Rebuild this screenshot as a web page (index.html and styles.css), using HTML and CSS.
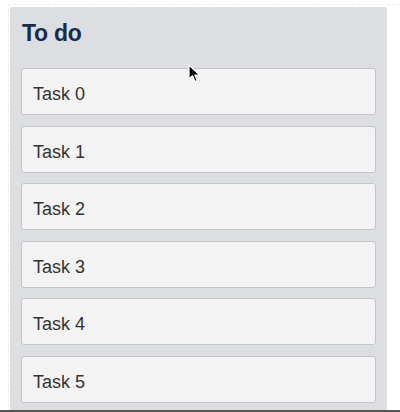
FILE: index.html
```html
<!DOCTYPE html>
<html lang="en">
<head>
    <meta charset="UTF-8">
    <meta name="viewport" content="width=device-width, initial-scale=1.0">
    <title>To do</title>
    <link rel="stylesheet" href="styles.css">
</head>
<body>
    <div class="viewport">
        <div class="board">
            <div class="list">
                <h2 class="list-title">To do</h2>
                <div class="cards">
                    <div class="card">Task 0</div>
                    <div class="card">Task 1</div>
                    <div class="card">Task 2</div>
                    <div class="card">Task 3</div>
                    <div class="card">Task 4</div>
                    <div class="card">Task 5</div>
                </div>
            </div>
        </div>
        <!-- mouse pointer from the recording -->
        <svg class="cursor" width="14" height="20" viewBox="0 0 14 20">
            <path d="M1 1 L1 15 L4.5 11.8 L7 17.5 L9.2 16.5 L6.8 11 L11.5 11 Z" fill="#000" stroke="#fff" stroke-width="1.2" stroke-linejoin="round"/>
        </svg>
    </div>
    <div class="bottom-line"></div>
</body>
</html>
```

FILE: styles.css
```css
body {
    margin: 0;
    background: #fff;
    font-family: "Liberation Sans", Arial, sans-serif;
}

.viewport {
    position: relative;
    height: 410px;
    overflow: hidden;
}

.board {
    margin: 4px 0 0 8px;
    padding: 2px 0 0 1px;
    border-top: 1px dashed #f0f0f0;
    border-left: 1px dashed #f0f0f0;
}

.list {
    width: 377px;
    height: 420px;
    box-sizing: border-box;
    padding: 12px 11px 11px;
    background: #dcdee2;
    border-radius: 3px;
}

.list-title {
    margin: 0 0 0 1px;
    font-size: 23px;
    line-height: 28px;
    font-weight: bold;
    letter-spacing: -0.3px;
    color: #172b4d;
}

.cards {
    display: flex;
    flex-direction: column;
    gap: 10.5px;
    margin-top: 21px;
}

.card {
    height: 47px;
    box-sizing: border-box;
    padding: 14px 11px 0;
    background: #f3f3f3;
    border: 1px solid #c3c5c9;
    border-radius: 3px;
    font-size: 18px;
    line-height: 22px;
    color: #333;
}

.cursor {
    position: absolute;
    left: 188px;
    top: 64px;
}

.bottom-line {
    height: 2px;
    background: #555;
}
```
